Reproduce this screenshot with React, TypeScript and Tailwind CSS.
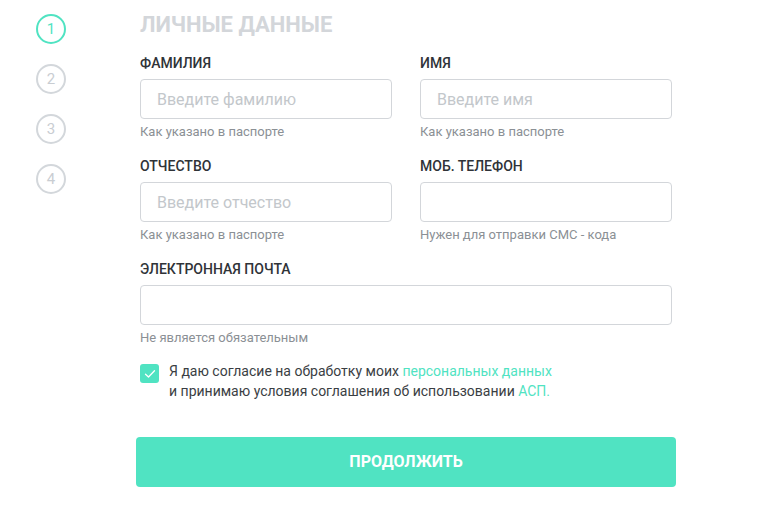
import React from "react";

const font = { fontFamily: "Roboto, 'Noto Sans', sans-serif" };

function Step({ n, active }: { n: number; active?: boolean }) {
  return (
    <div
      className={
        "flex h-[30px] w-[30px] items-center justify-center rounded-full border-2 text-[15px] leading-none " +
        (active ? "border-[#50e3c2] text-[#50e3c2]" : "border-[#d3d7db] text-[#c9cdd2]")
      }
    >
      {n}
    </div>
  );
}

function Field({ label, placeholder, hint }: { label: string; placeholder?: string; hint: string }) {
  return (
    <div className="flex flex-col">
      <div className="text-[14px] font-medium leading-[20px] text-[#2f3338]">{label}</div>
      <input
        className="mt-[6px] h-[40px] w-full rounded-[4px] border border-[#d3d6da] bg-white px-[16px] text-[16px] text-[#333] outline-none placeholder:text-[#c3c7cb]"
        placeholder={placeholder}
        style={font}
      />
      <div className="mt-[5px] text-[13px] leading-[16px] text-[#8b9095]">{hint}</div>
    </div>
  );
}

export default function App() {
  return (
    <div className="min-h-[507px] w-[769px] bg-white" style={font}>
      <div className="flex pl-[36px] pt-[14px]">
        <div className="flex w-[30px] flex-col gap-[20px]">
          <Step n={1} active />
          <Step n={2} />
          <Step n={3} />
          <Step n={4} />
        </div>
        <div className="ml-[74px] flex w-[532px] flex-col">
          <div className="-mt-[3px] text-[22px] font-bold leading-[28px] text-[#d3d6da]">ЛИЧНЫЕ ДАННЫЕ</div>
          <div className="mt-[14px] grid grid-cols-2 gap-x-[28px] gap-y-[16px]">
            <Field label="ФАМИЛИЯ" placeholder="Введите фамилию" hint="Как указано в паспорте" />
            <Field label="ИМЯ" placeholder="Введите имя" hint="Как указано в паспорте" />
            <Field label="ОТЧЕСТВО" placeholder="Введите отчество" hint="Как указано в паспорте" />
            <Field label="МОБ. ТЕЛЕФОН" hint="Нужен для отправки СМС - кода" />
            <div className="col-span-2">
              <Field label="ЭЛЕКТРОННАЯ ПОЧТА" hint="Не является обязательным" />
            </div>
          </div>
          <div className="mt-[15px] flex items-start gap-[10px]">
            <div className="mt-[3px] flex h-[19px] w-[19px] shrink-0 items-center justify-center rounded-[3px] bg-[#50e3c2]">
              <svg width="12" height="10" viewBox="0 0 12 10" fill="none">
                <path d="M1.5 5.2 L4.5 8 L10.5 1.8" stroke="white" strokeWidth="1.3" strokeLinecap="round" strokeLinejoin="round" />
              </svg>
            </div>
            <div className="text-[14px] leading-[20px] text-[#3a3e43]">
              Я даю согласие на обработку моих <span className="text-[#50e3c2]">персональных данных</span>
              <br />
              и принимаю условия соглашения об использовании <span className="text-[#50e3c2]">АСП.</span>
            </div>
          </div>
          <button
            className="-mx-[4px] mt-[36px] h-[50px] rounded-[4px] bg-[#50e3c2] text-[16px] font-bold text-white"
            style={font}
          >
            ПРОДОЛЖИТЬ
          </button>
        </div>
      </div>
    </div>
  );
}
